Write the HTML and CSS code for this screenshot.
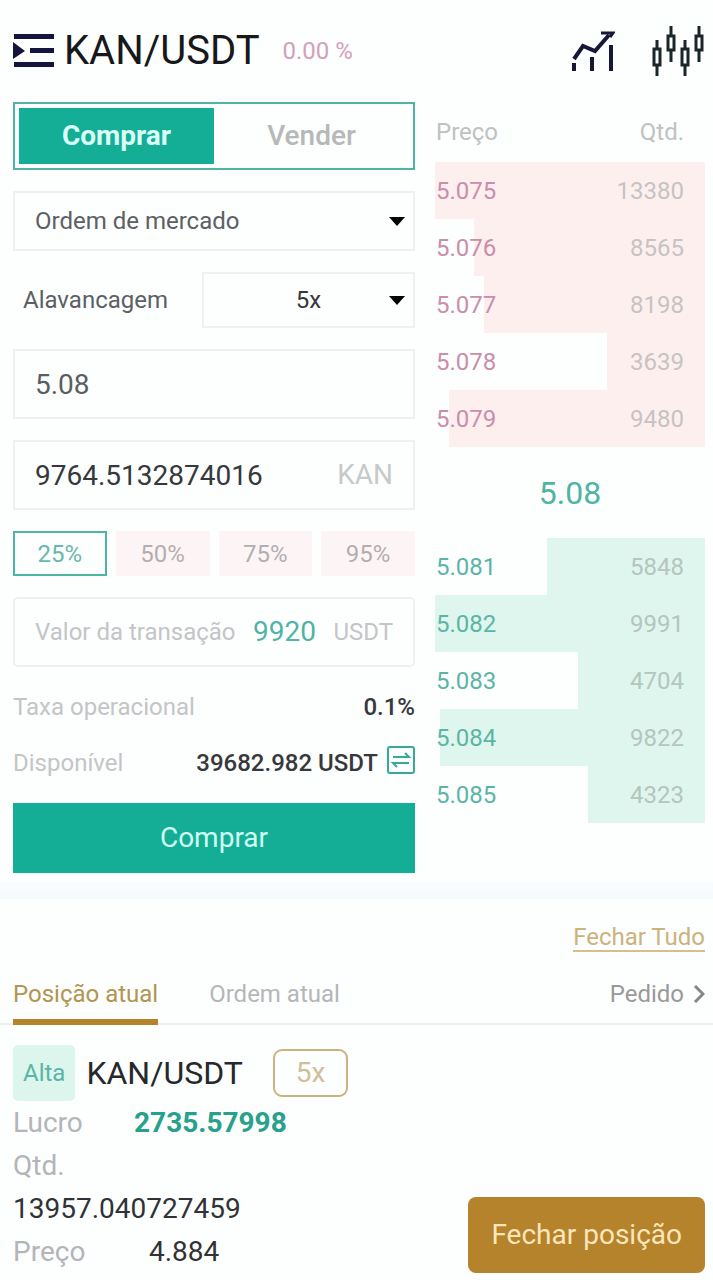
FILE: index.html
```html
<!DOCTYPE html>
<html lang="pt">
<head>
<meta charset="utf-8">
<meta name="viewport" content="width=device-width, initial-scale=1">
<title>KAN/USDT</title>
<link rel="stylesheet" href="styles.css">
</head>
<body>
<header class="header">
  <button class="icon-button" type="button" aria-label="Mercados">
    <svg width="42" height="34" viewBox="0 0 42 34" fill="#14153f"><path d="M1 0h40v5H1zM17 14h24v5H17zM1 28h40v5H1zM0 8l12 9-12 8z"/></svg>
  </button>
  <h1 class="header-title">KAN/USDT</h1>
  <span class="header-change">0.00 %</span>
  <div class="header-tools">
    <button class="icon-button" type="button" aria-label="Gráfico">
      <svg width="44" height="44" viewBox="0 0 44 44" fill="none" stroke="#17173a" stroke-width="4"><path d="M3 30 12 17l12 5L38 6"/><path d="M30 4h12l-3 4" stroke-width="3"/><path d="M3 34v8M21 28v14M40 16v26"/></svg>
    </button>
    <button class="icon-button" type="button" aria-label="Velas">
      <svg width="54" height="52" viewBox="0 0 54 52" fill="none" stroke="#1b262b" stroke-width="3"><path d="M6 15v9M6 40v11M20 1v10M20 25v12M34 15v9M34 40v11M48 1v10M48 25v12"/><path d="M3 24h6v16H3zM17 11h6v14h-6zM31 24h6v16h-6zM45 11h6v14h-6z"/></svg>
    </button>
  </div>
</header>

<main>
  <div class="trade">
    <form class="order">
      <div class="side">
        <button class="side-option side-active" type="button">Comprar</button>
        <button class="side-option" type="button">Vender</button>
      </div>

      <div class="select-box">
        <select class="select" aria-label="Tipo de ordem"><option>Ordem de mercado</option></select>
        <svg class="caret" width="16" height="9" viewBox="0 0 16 9"><path d="M0 0h16L8 9z"/></svg>
      </div>

      <div class="leverage">
        <label class="leverage-label" for="leverage">Alavancagem</label>
        <div class="select-box">
          <select class="select select-centered" id="leverage"><option>5x</option></select>
          <svg class="caret" width="16" height="9" viewBox="0 0 16 9"><path d="M0 0h16L8 9z"/></svg>
        </div>
      </div>

      <div class="field"><input class="field-input price-input" type="text" value="5.08" aria-label="Preço"></div>
      <div class="field">
        <input class="field-input" id="amount" type="text" value="9764.5132874016">
        <label class="field-unit" for="amount">KAN</label>
      </div>

      <div class="percents">
        <button class="percent percent-active" type="button">25%</button>
        <button class="percent" type="button">50%</button>
        <button class="percent" type="button">75%</button>
        <button class="percent" type="button">95%</button>
      </div>

      <div class="field total">
        <span>Valor da transação</span>
        <output class="total-value">9920</output>
        <span>USDT</span>
      </div>

      <dl class="summary">
        <div class="summary-row"><dt>Taxa operacional</dt><dd>0.1%</dd></div>
        <div class="summary-row">
          <dt>Disponível</dt>
          <dd>39682.982 USDT
            <button class="icon-button transfer" type="button" aria-label="Transferir">
              <svg width="28" height="28" viewBox="0 0 28 28" fill="none" stroke="#35aa98" stroke-width="2"><rect x="1" y="1" width="26" height="26" rx="2"/><path d="M6 11h16l-4-4M22 17H6l4 4"/></svg>
            </button>
          </dd>
        </div>
      </dl>
      <button class="submit" type="button">Comprar</button>
    </form>

    <section class="book" aria-label="Livro de ofertas">
      <div class="book-head"><span>Preço</span><span>Qtd.</span></div>
      <ul class="levels asks">
        <li class="level"><span class="depth" style="width:100%"></span><span class="level-price">5.075</span><span class="level-size">13380</span></li>
        <li class="level"><span class="depth" style="width:85.65%"></span><span class="level-price">5.076</span><span class="level-size">8565</span></li>
        <li class="level"><span class="depth" style="width:81.98%"></span><span class="level-price">5.077</span><span class="level-size">8198</span></li>
        <li class="level"><span class="depth" style="width:36.39%"></span><span class="level-price">5.078</span><span class="level-size">3639</span></li>
        <li class="level"><span class="depth" style="width:94.8%"></span><span class="level-price">5.079</span><span class="level-size">9480</span></li>
      </ul>
      <p class="last-price">5.08</p>
      <ul class="levels bids">
        <li class="level"><span class="depth" style="width:58.48%"></span><span class="level-price">5.081</span><span class="level-size">5848</span></li>
        <li class="level"><span class="depth" style="width:99.91%"></span><span class="level-price">5.082</span><span class="level-size">9991</span></li>
        <li class="level"><span class="depth" style="width:47.04%"></span><span class="level-price">5.083</span><span class="level-size">4704</span></li>
        <li class="level"><span class="depth" style="width:98.22%"></span><span class="level-price">5.084</span><span class="level-size">9822</span></li>
        <li class="level"><span class="depth" style="width:43.23%"></span><span class="level-price">5.085</span><span class="level-size">4323</span></li>
      </ul>
    </section>
  </div>

  <div class="divider"></div>

  <section class="positions">
    <div class="close-all"><a href="#">Fechar Tudo</a></div>
    <nav class="tabs">
      <a class="tab tab-active" href="#">Posição atual</a>
      <a class="tab" href="#">Ordem atual</a>
      <a class="tab tab-orders" href="#">Pedido
        <svg width="12" height="18" viewBox="0 0 12 18" fill="none" stroke="#858585" stroke-width="3"><path d="M2 1l8 8-8 8"/></svg>
      </a>
    </nav>
    <article class="position">
      <div class="position-head">
        <span class="direction">Alta</span>
        <h2 class="position-title">KAN/USDT</h2>
        <span class="multiplier">5x</span>
      </div>
      <div class="position-body">
        <dl class="stats">
          <div class="stat"><dt>Lucro</dt><dd class="profit">2735.57998</dd></div>
          <div class="stat stat-stacked"><dt>Qtd.</dt><dd>13957.040727459</dd></div>
          <div class="stat stat-wide"><dt>Preço</dt><dd>4.884</dd></div>
        </dl>
        <button class="close-position" type="button">Fechar posição</button>
      </div>
    </article>
  </section>
</main>
</body>
</html>
```
FILE: styles.css
```css
* { box-sizing: border-box; }

body {
  margin: 0;
  background: #fdfefe;
  color: #303236;
  font-family: Roboto, "Liberation Sans", sans-serif;
  font-size: 24px;
  line-height: 28px;
}

h1, h2, p, ul, dl, dd { margin: 0; padding: 0; }
ul { list-style: none; }
button, input, select { font: inherit; color: inherit; margin: 0; border-radius: 0; }
button { padding: 0; border: 0; background: none; cursor: pointer; }
a { color: inherit; text-decoration: none; }
svg { display: block; flex: none; }

.icon-button { display: flex; }

.header {
  display: flex;
  align-items: center;
  height: 102px;
  padding: 0 8px 0 13px;
}
.header-title {
  margin-left: 9px;
  color: #17181a;
  font-size: 40px;
  font-weight: 400;
  line-height: 48px;
}
.header-change { margin-left: 23px; color: #d3a0ba; }
.header-tools { display: flex; align-items: center; gap: 36px; margin-left: auto; }

.trade {
  display: grid;
  grid-template-columns: 67fr 45fr;
  gap: 20px;
  padding: 0 8px 9px 13px;
}

.order { display: flex; flex-direction: column; gap: 21px; min-width: 0; }

.side {
  display: grid;
  grid-template-columns: 1fr 1fr;
  height: 68px;
  padding: 4px;
  border: 2px solid #4db5a4;
}
.side-option { color: #b7b8b9; font-size: 28px; font-weight: 500; }
.side-active { background: #14ae96; color: #d9fff6; font-weight: 700; }

.select-box { position: relative; flex: 1; }
.select {
  display: block;
  width: 100%;
  height: 60px;
  padding: 0 40px 0 20px;
  border: 2px solid #f0f0f0;
  background: #fdfefe;
  color: #5c6065;
  appearance: none;
}
.select-centered {
  height: 56px;
  padding: 0 20px;
  color: #36383b;
  text-align: center;
  text-align-last: center;
}
.caret { position: absolute; top: calc(50% - 4px); right: 10px; pointer-events: none; }

.leverage { display: grid; grid-template-columns: 178px 1fr; align-items: center; gap: 11px; }
.leverage-label { padding-left: 10px; color: #5c6065; }

.field {
  display: flex;
  align-items: center;
  height: 70px;
  padding: 0 20px;
  border: 2px solid #f0f0f0;
  font-size: 28px;
}
.field-input {
  flex: 1;
  min-width: 0;
  padding: 0;
  border: 0;
  outline: 0;
  background: none;
  color: #36383b;
}
.price-input { color: #5b5d61; }
.field-unit { color: #c8c9ca; }

.percents { display: grid; grid-template-columns: repeat(4, 1fr); gap: 9px; }
.percent { height: 45px; background: #fdf5f5; color: #b2aeb0; }
.percent-active { border: 2px solid #4db5a4; background: #fdfefe; color: #68b9ac; }

.total { justify-content: space-between; border-radius: 5px; color: #c4c5c6; font-size: 24px; }
.total-value { color: #4fb4a3; font-size: 28px; }

.summary { display: flex; flex-direction: column; gap: 18px; color: #c4c5c6; }
.summary-row { display: flex; justify-content: space-between; align-items: center; height: 38px; }
.summary dd { display: flex; align-items: center; gap: 9px; color: #36383c; font-weight: 500; }
.transfer { padding-bottom: 6px; }

.submit { height: 70px; background: #14ae96; color: #d0fff3; font-size: 28px; }

.book { min-width: 0; }
.book-head {
  display: flex;
  justify-content: space-between;
  height: 60px;
  padding: 16px 21px 0 1px;
  color: #c0c1c2;
}
.level {
  position: relative;
  display: flex;
  justify-content: space-between;
  align-items: center;
  height: 57px;
  padding: 0 21px 0 1px;
}
.depth { position: absolute; top: 0; right: 0; bottom: 0; }
.level-price, .level-size { position: relative; }
.level-size { color: #c6c3c3; }
.asks .depth { background: #feefef; }
.asks .level-price { color: #ca8dab; }
.bids .depth { background: #def6ed; }
.bids .level-price { color: #5bb5a6; }
.bids .level-size { color: #b5c5bf; }
.last-price {
  padding: 26px 0 25px;
  color: #4fb4a3;
  font-size: 32px;
  line-height: 40px;
  text-align: center;
}

.divider { height: 17px; background: linear-gradient(#fafdff, #f4f9fc); }

.close-all {
  display: flex;
  justify-content: flex-end;
  padding: 26px 8px 0;
  color: #cbb37d;
}
.close-all a { border-bottom: 2px solid #d5bf8c; line-height: 25px; }

.tabs {
  display: flex;
  gap: 51px;
  height: 73px;
  padding: 0 8px 0 13px;
  border-bottom: 2px solid #efefef;
}
.tab { padding-top: 28px; color: #b5b6b8; }
.tab-active { margin-bottom: -2px; border-bottom: 6px solid #b5832b; color: #b19551; }
.tab-orders { display: flex; align-items: center; gap: 9px; height: 56px; margin-left: auto; color: #999; }

.position { padding: 20px 8px 6px 13px; }
.position-head { display: flex; align-items: center; }
.direction {
  padding: 14px 10px;
  border-radius: 5px;
  background: #dcf6ed;
  color: #5bb5a6;
}
.position-title { margin-left: 11px; color: #26282b; font-size: 32px; font-weight: 400; }
.multiplier {
  margin-left: 30px;
  padding: 8px 21px;
  border: 2px solid #c9b37e;
  border-radius: 9px;
  color: #cfc09b;
  font-size: 28px;
}
.position-body { display: flex; justify-content: space-between; align-items: flex-end; }
.stats { font-size: 28px; line-height: 43px; }
.stat { display: grid; grid-template-columns: 121px auto; }
.stat-wide { grid-template-columns: 136px auto; }
.stat-stacked { grid-template-columns: auto; }
.stat dt { color: #b3b5b8; }
.profit { color: #27a18b; font-weight: 700; }
.close-position {
  padding: 24px 23px;
  border-radius: 8px;
  background: #b5832b;
  color: #fbe6bb;
  font-size: 28px;
}
```
